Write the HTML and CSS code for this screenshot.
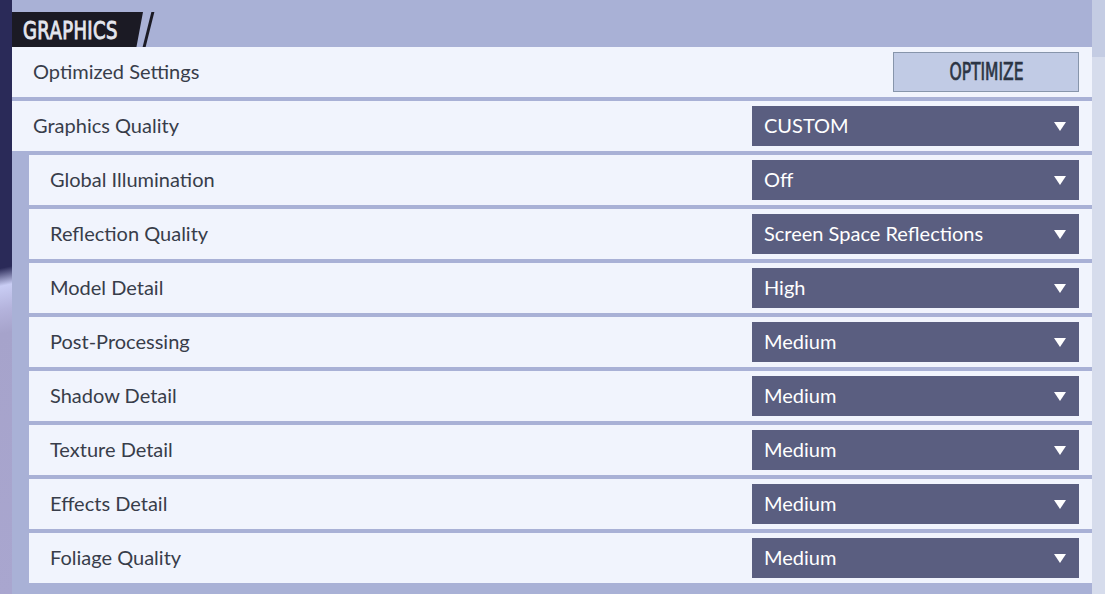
FILE: index.html
```html
<!DOCTYPE html>
<html lang="en">
<head>
    <meta charset="UTF-8">
    <meta name="viewport" content="width=device-width, initial-scale=1.0">
    <title>Graphics</title>
    <link rel="stylesheet" href="styles.css">
</head>
<body>
    <div class="side"></div>
    <div class="panel">
        <div class="panel-head">
            <div class="tab"><span class="tab-title">GRAPHICS</span></div>
            <div class="tab-slash"></div>
        </div>
        <div class="rows">
            <div class="row">
                <span class="label">Optimized Settings</span>
                <button class="optimize"><span>OPTIMIZE</span></button>
            </div>
            <div class="row">
                <span class="label">Graphics Quality</span>
                <div class="select">CUSTOM<i class="arrow"></i></div>
            </div>
            <div class="row sub">
                <span class="label">Global Illumination</span>
                <div class="select">Off<i class="arrow"></i></div>
            </div>
            <div class="row sub">
                <span class="label">Reflection Quality</span>
                <div class="select">Screen Space Reflections<i class="arrow"></i></div>
            </div>
            <div class="row sub">
                <span class="label">Model Detail</span>
                <div class="select">High<i class="arrow"></i></div>
            </div>
            <div class="row sub">
                <span class="label">Post-Processing</span>
                <div class="select">Medium<i class="arrow"></i></div>
            </div>
            <div class="row sub">
                <span class="label">Shadow Detail</span>
                <div class="select">Medium<i class="arrow"></i></div>
            </div>
            <div class="row sub">
                <span class="label">Texture Detail</span>
                <div class="select">Medium<i class="arrow"></i></div>
            </div>
            <div class="row sub">
                <span class="label">Effects Detail</span>
                <div class="select">Medium<i class="arrow"></i></div>
            </div>
            <div class="row sub">
                <span class="label">Foliage Quality</span>
                <div class="select">Medium<i class="arrow"></i></div>
            </div>
        </div>
    </div>
    <div class="edge"></div>
</body>
</html>
```

FILE: styles.css
```css
body {
    margin: 0;
    height: 594px;
    display: flex;
    overflow: hidden;
    background-color: #a9b1d6;
    font-family: 'Lato', 'Noto Sans', sans-serif;
}

.side {
    width: 12px;
    background: linear-gradient(168deg, #2a2a58 0%, #2a2a58 45%, #c9cdf4 48%, #b4b3dc 52%, #a6a3cb 56%, #a9a6cf 100%);
}

.panel {
    flex: 1;
    background-color: #a9b1d6;
    padding-bottom: 11px;
}

.edge {
    width: 13px;
    background: linear-gradient(180deg, #c4cce3 0, #c4cce3 57px, #d6dcec 57px);
}

.panel-head {
    height: 47px;
    display: flex;
    align-items: flex-end;
}

.tab {
    height: 35px;
    width: 131px;
    background-color: #1b1a24;
    clip-path: polygon(0 0, 100% 0, 95% 100%, 0 100%);
    display: flex;
    align-items: center;
}

.tab-title {
    display: inline-block;
    color: #e4e6ee;
    font-family: 'DejaVu Sans Condensed', 'DejaVu Sans', sans-serif;
    font-size: 25px;
    letter-spacing: 0.5px;
    -webkit-text-stroke: 0.9px #e4e6ee;
    transform: scaleX(0.8);
    transform-origin: left center;
    margin-left: 11px;
    margin-top: 1px;
}

.tab-slash {
    width: 3px;
    height: 35px;
    margin-left: 4px;
    background-color: #1b1a24;
    transform: skewX(-14deg);
}

.rows {
    display: flex;
    flex-direction: column;
    gap: 4px;
}

.row {
    height: 50px;
    box-sizing: border-box;
    background-color: #f1f4fd;
    display: flex;
    align-items: center;
    justify-content: space-between;
    padding: 0 13px 0 21px;
}

.row.sub {
    margin-left: 17px;
}

.label {
    color: #383d4a;
    font-size: 20px;
    margin-bottom: 3px;
}

.optimize {
    width: 186px;
    height: 40px;
    border: 1px solid #8795ab;
    background-color: #c1cbe5;
    padding: 0;
    cursor: pointer;
}

.optimize span {
    display: inline-block;
    color: #2b3444;
    font-family: 'DejaVu Sans Condensed', 'DejaVu Sans', sans-serif;
    font-size: 24px;
    -webkit-text-stroke: 0.7px #2b3444;
    transform: scaleX(0.72);
}

.select {
    width: 327px;
    height: 40px;
    box-sizing: border-box;
    background-color: #5a5e80;
    color: #ffffff;
    font-size: 20px;
    display: flex;
    align-items: center;
    justify-content: space-between;
    padding: 0 13px 2px 12px;
}

.arrow {
    width: 0;
    height: 0;
    margin-top: 2px;
    border-left: 6px solid transparent;
    border-right: 6px solid transparent;
    border-top: 9px solid #ffffff;
}
```
